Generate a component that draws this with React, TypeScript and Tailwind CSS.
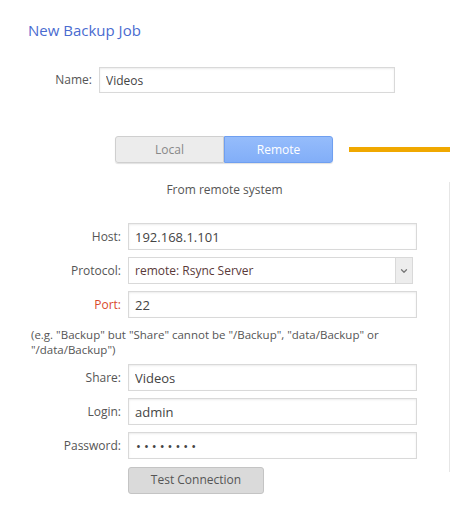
import { ChevronDown } from 'lucide-react'

const labelCls = 'w-[128px] shrink-0 text-right text-[12px] text-[#555] pr-[7px]'
const inputCls =
  'h-[27px] w-[289px] border border-[#d9d9d9] bg-white px-[6px] text-[13px] text-[#444] shadow-[inset_0_1px_2px_rgba(0,0,0,0.08)] outline-none'

function Row({ label, children, red }: { label: string; children: React.ReactNode; red?: boolean }) {
  return (
    <div className="flex items-center">
      <label className={`${labelCls} ${red ? 'text-[#d9492c]' : ''}`}>{label}</label>
      {children}
    </div>
  )
}

export default function App() {
  return (
    <div className="w-[450px] h-[528px] bg-white overflow-hidden" style={{ fontFamily: '"Open Sans", sans-serif' }}>
      {/* Header */}
      <h1 className="pt-[20px] pl-[28px] text-[15px] leading-[20px] text-[#4a6bd0]">New Backup Job</h1>

      {/* Name */}
      <div className="mt-[27px] flex items-center">
        <label className="w-[99px] shrink-0 text-right text-[12px] text-[#555] pr-[7px]">Name:</label>
        <input readOnly value="Videos" className="h-[26px] w-[296px] border border-[#d9d9d9] bg-white px-[6px] text-[12px] text-[#444] shadow-[inset_0_1px_2px_rgba(0,0,0,0.08)] outline-none" />
      </div>

      {/* Local / Remote toggle */}
      <div className="mt-[43px] flex items-center pl-[115px] gap-[16px]">
        <div className="flex h-[27px] w-[218px] rounded-[3px] shadow-[0_1px_1px_rgba(0,0,0,0.12)]">
          <button className="flex-1 rounded-l-[3px] border border-[#cfcfcf] bg-[#ececec] text-[12px] text-[#888]">Local</button>
          <button className="flex-1 rounded-r-[3px] border border-[#6f9ff0] bg-gradient-to-b from-[#95bcfb] to-[#82aef8] text-[12px] text-white">Remote</button>
        </div>
        <div className="h-[5px] flex-1 bg-[#f0a800]" />
      </div>

      {/* Remote form */}
      <div className="mt-[19px] h-[290px] border-r border-[#e6e6e6]">
        <p className="text-center text-[12px] leading-[16px] text-[#555]">From remote system</p>

        <div className="mt-[25px] flex flex-col gap-[7px]">
          <Row label="Host:">
            <input readOnly value="192.168.1.101" className={inputCls} />
          </Row>
          <Row label="Protocol:">
            <div className="flex h-[27px] w-[285px] border border-[#d9d9d9] bg-white">
              <span className="flex-1 px-[6px] text-[12px] leading-[25px] text-[#5a3a3a]">remote: Rsync Server</span>
              <span className="flex w-[17px] items-center justify-center border-l border-[#d9d9d9] bg-[#ededed]">
                <ChevronDown size={10} strokeWidth={3} className="text-[#777]" />
              </span>
            </div>
          </Row>
          <Row label="Port:" red>
            <input readOnly value="22" className={inputCls} />
          </Row>
        </div>

        <div className="mt-[9px] pl-[31px] text-[11.5px] text-[#555]">
          <p className="leading-[15px]">(e.g. "Backup" but "Share" cannot be "/Backup", "data/Backup" or</p>
          <p className="leading-[15px]">"/data/Backup")</p>
        </div>

        <div className="mt-[7px] flex flex-col gap-[7px]">
          <Row label="Share:">
            <input readOnly value="Videos" className={inputCls} />
          </Row>
          <Row label="Login:">
            <input readOnly value="admin" className={inputCls} />
          </Row>
          <Row label="Password:">
            <input readOnly type="password" value="••••••••" className={`${inputCls} pl-[7px] text-[7px] tracking-[3px]`} />
          </Row>
          <div className="pl-[128px]">
            <button className="h-[27px] w-[136px] rounded-[3px] border border-[#c4c4c4] bg-[#dadada] text-[12px] text-[#555]">
              Test Connection
            </button>
          </div>
        </div>
      </div>
    </div>
  )
}
